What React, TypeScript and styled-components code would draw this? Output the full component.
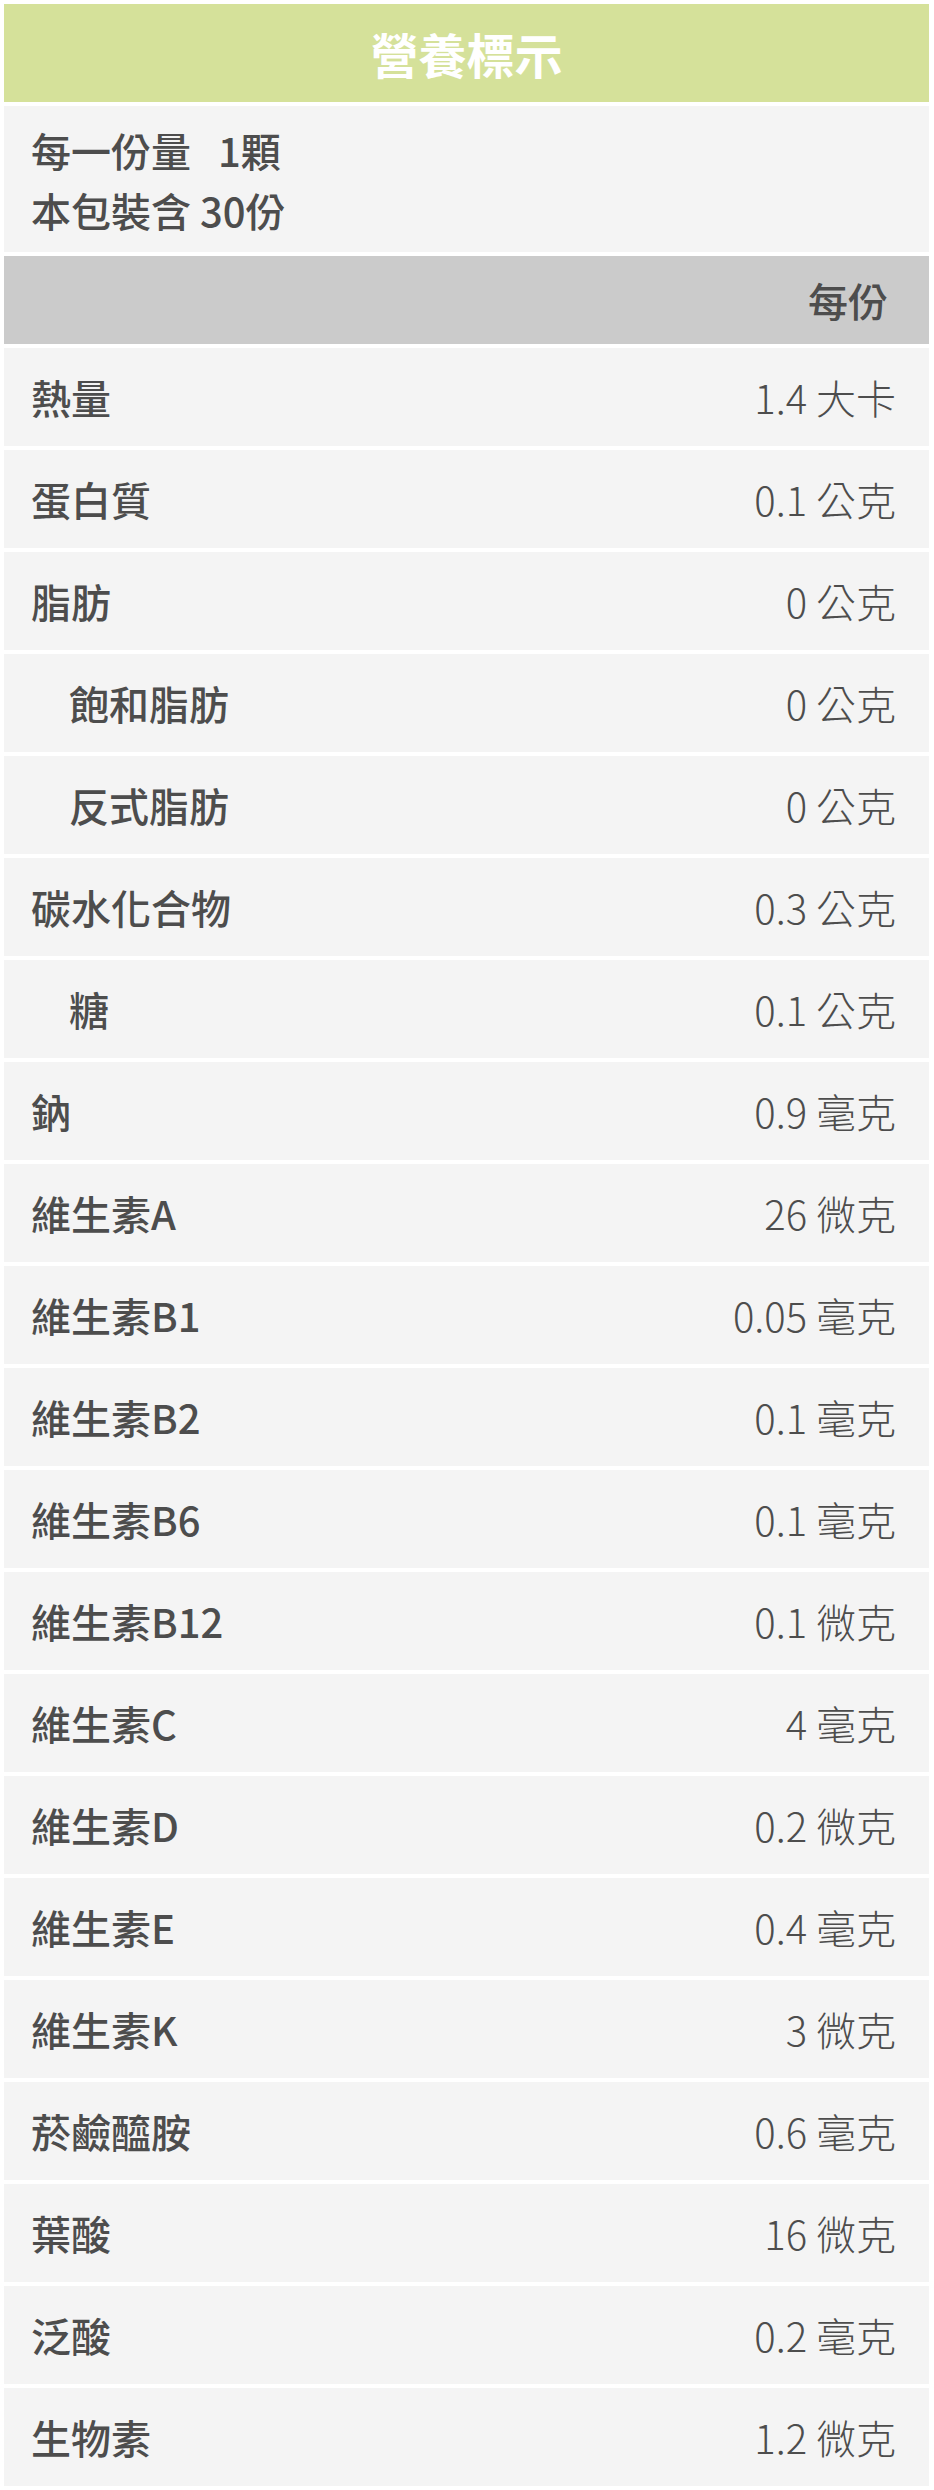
import styled, { createGlobalStyle } from 'styled-components';

const GlobalStyle = createGlobalStyle`
  body {
    margin: 0;
    background: #fff;
    font-family: "Noto Sans CJK TC", "Noto Sans", sans-serif;
  }
`;

const Panel = styled.div`
  width: 934px;
  box-sizing: border-box;
  padding: 4px 5px 4px 4px;
  display: flex;
  flex-direction: column;
  gap: 4px;
  background: #fff;
`;

const Title = styled.div`
  height: 98px;
  background: #d5e19a;
  color: #fff;
  font-size: 48px;
  font-weight: 700;
  display: flex;
  align-items: center;
  justify-content: center;
`;

const Serving = styled.div`
  background: #f4f4f4;
  color: #4d4d4d;
  font-size: 40px;
  font-weight: 500;
  line-height: 60px;
  padding: 14px 27px 12px;
`;

const ColumnHead = styled.div`
  height: 88px;
  background: #cbcbcb;
  color: #4d4d4d;
  font-size: 40px;
  font-weight: 500;
  display: flex;
  align-items: center;
  justify-content: flex-end;
  padding-right: 41px;
`;

const Row = styled.div`
  height: 98px;
  background: #f4f4f4;
  color: #4d4d4d;
  font-size: 40px;
  display: flex;
  align-items: center;
  justify-content: space-between;
  padding: 0 33px 0 27px;
`;

const Label = styled.span<{ $sub?: boolean }>`
  font-weight: 500;
  padding-left: ${(p) => (p.$sub ? '38px' : '0')};
`;

const Amount = styled.span`
  font-weight: 300;
`;

const rows: [string, string, boolean?][] = [
  ['熱量', '1.4 大卡'],
  ['蛋白質', '0.1 公克'],
  ['脂肪', '0 公克'],
  ['飽和脂肪', '0 公克', true],
  ['反式脂肪', '0 公克', true],
  ['碳水化合物', '0.3 公克'],
  ['糖', '0.1 公克', true],
  ['鈉', '0.9 毫克'],
  ['維生素A', '26 微克'],
  ['維生素B1', '0.05 毫克'],
  ['維生素B2', '0.1 毫克'],
  ['維生素B6', '0.1 毫克'],
  ['維生素B12', '0.1 微克'],
  ['維生素C', '4 毫克'],
  ['維生素D', '0.2 微克'],
  ['維生素E', '0.4 毫克'],
  ['維生素K', '3 微克'],
  ['菸鹼醯胺', '0.6 毫克'],
  ['葉酸', '16 微克'],
  ['泛酸', '0.2 毫克'],
  ['生物素', '1.2 微克'],
];

export default function App() {
  return (
    <>
      <GlobalStyle />
      <Panel>
        <Title>營養標示</Title>
        <Serving>
          <div>每一份量&nbsp;&nbsp; 1顆</div>
          <div>本包裝含 30份</div>
        </Serving>
        <ColumnHead>每份</ColumnHead>
        {rows.map(([name, value, sub]) => (
          <Row key={name}>
            <Label $sub={sub}>{name}</Label>
            <Amount>{value}</Amount>
          </Row>
        ))}
      </Panel>
    </>
  );
}
